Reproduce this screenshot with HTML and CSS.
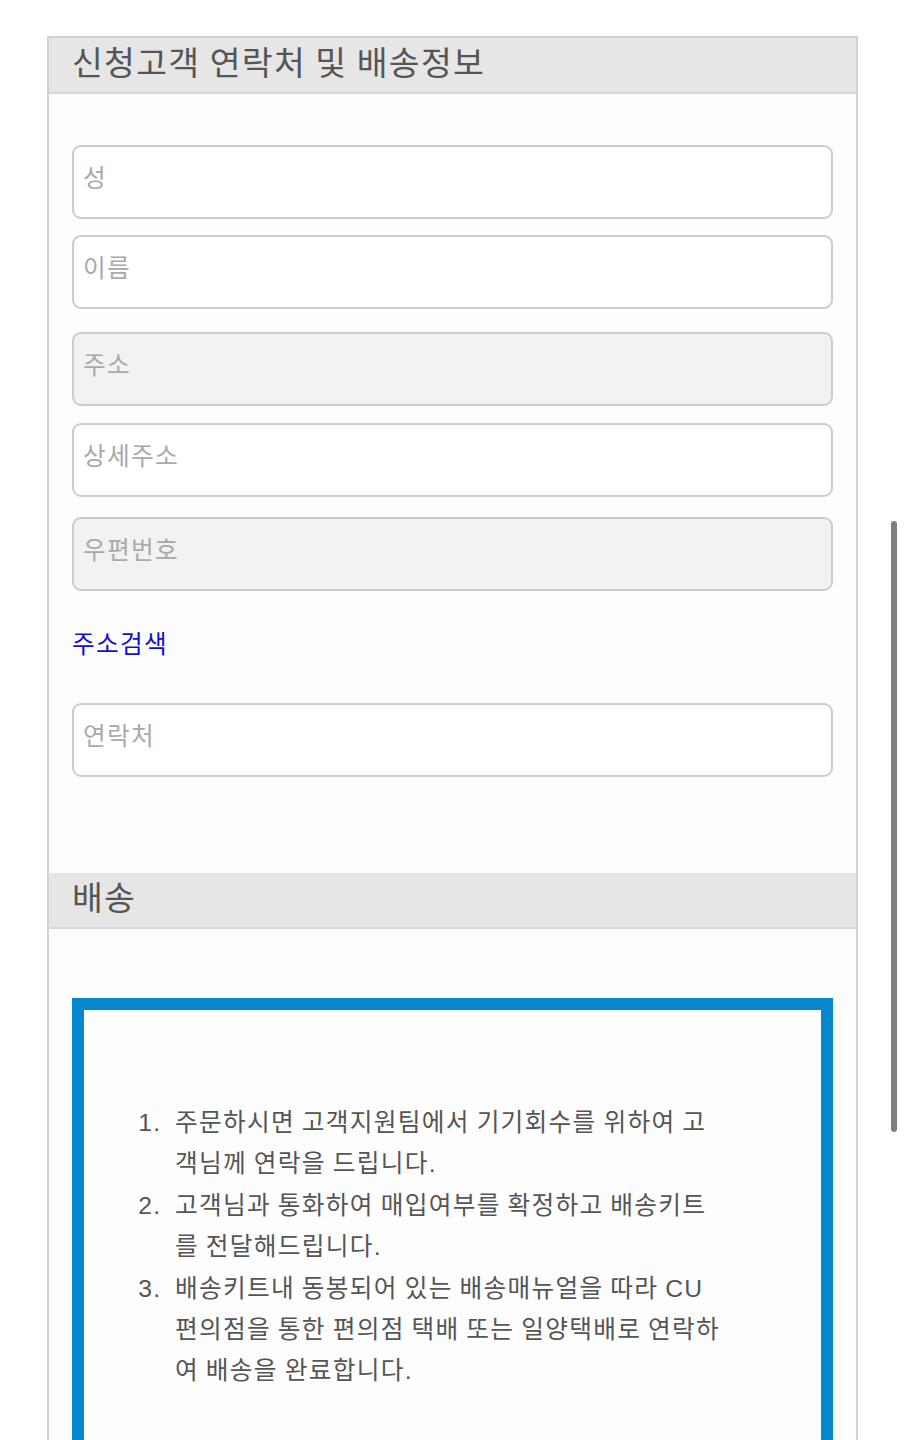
FILE: index.html
```html
<!DOCTYPE html>
<html lang="ko">
<head>
<meta charset="utf-8">
<title>신청고객 연락처 및 배송정보</title>
<link rel="stylesheet" href="styles.css">
</head>
<body>
<div class="page">
  <div class="panel">
    <div class="panel-head">신청고객 연락처 및 배송정보</div>
    <div class="panel-body">
      <input class="field" type="text" placeholder="성">
      <input class="field field-gap-lg" type="text" placeholder="이름">
      <input class="field field-gap-xs" type="text" placeholder="주소" disabled>
      <input class="field field-gap-sm" type="text" placeholder="상세주소">
      <input class="field" type="text" placeholder="우편번호" disabled>
      <a class="search-link" href="#">주소검색</a>
      <input class="field" type="tel" placeholder="연락처">
    </div>
    <div class="panel-head">배송</div>
    <div class="panel-body shipping">
      <div class="notice">
        <ol class="steps">
          <li>주문하시면 고객지원팀에서 기기회수를 위하여 고객님께 연락을 드립니다.</li>
          <li>고객님과 통화하여 매입여부를 확정하고 배송키트를 전달해드립니다.</li>
          <li>배송키트내 동봉되어 있는 배송매뉴얼을 따라 CU 편의점을 통한 편의점 택배 또는 일양택배로 연락하여 배송을 완료합니다.</li>
        </ol>
      </div>
    </div>
  </div>
  <div class="scroll-indicator"></div>
</div>
</body>
</html>
```

FILE: styles.css
```css
html, body {
  margin: 0;
  padding: 0;
  background: #ffffff;
}

body {
  font-family: "Liberation Sans", "Noto Sans CJK KR", sans-serif;
  color: #555555;
  letter-spacing: 0.08em;
  word-spacing: -0.08em;
}

.page {
  position: relative;
  height: 1440px;
  overflow: hidden;
  padding: 36px 47px 0;
  box-sizing: border-box;
}

.panel {
  border: 2px solid #d2d2d2;
  border-bottom: none;
  background: #fdfdfd;
  min-height: 1500px;
}

.panel-head {
  background: #e6e6e6;
  border-bottom: 2px solid #d8d8d8;
  height: 54px;
  line-height: 52px;
  padding: 0 23px;
  font-size: 33.5px;
  color: #555555;
}

.panel-body {
  display: flex;
  flex-direction: column;
  gap: 16px;
  padding: 51px 23px 96px;
}

.field {
  display: block;
  box-sizing: border-box;
  width: 100%;
  height: 74px;
  margin: 0;
  padding: 0 9px 6px;
  border: 2px solid #cccccc;
  border-radius: 9px;
  background: #ffffff;
  font-family: inherit;
  font-size: 24.7px;
  letter-spacing: inherit;
  word-spacing: inherit;
  color: #555555;
}

.field::placeholder {
  color: #a9a9a9;
  opacity: 1;
}

.field:disabled {
  background: #f2f2f2;
}

.field-gap-lg {
  margin-bottom: 7px;
}

.field-gap-xs {
  margin-bottom: 1px;
}

.field-gap-sm {
  margin-bottom: 4px;
}

.search-link {
  display: block;
  margin: 20px 0 24px;
  line-height: 36px;
  font-size: 24.7px;
  color: #1010cc;
  text-decoration: none;
}

.shipping {
  padding: 69px 23px 0;
}

.notice {
  border: 12px solid #0787cb;
  background: #fdfdfd;
  padding: 92px 0 200px 0;
}

.steps {
  width: 549px;
  margin: 0;
  padding-left: 91px;
  font-size: 24.7px;
  line-height: 41.4px;
  color: #555555;
}

.steps li::marker {
  content: counter(list-item) ".\2002";
}

.scroll-indicator {
  position: absolute;
  top: 521px;
  right: 8px;
  width: 6px;
  height: 611px;
  border-radius: 3px;
  background: #7f7f7f;
}
```
